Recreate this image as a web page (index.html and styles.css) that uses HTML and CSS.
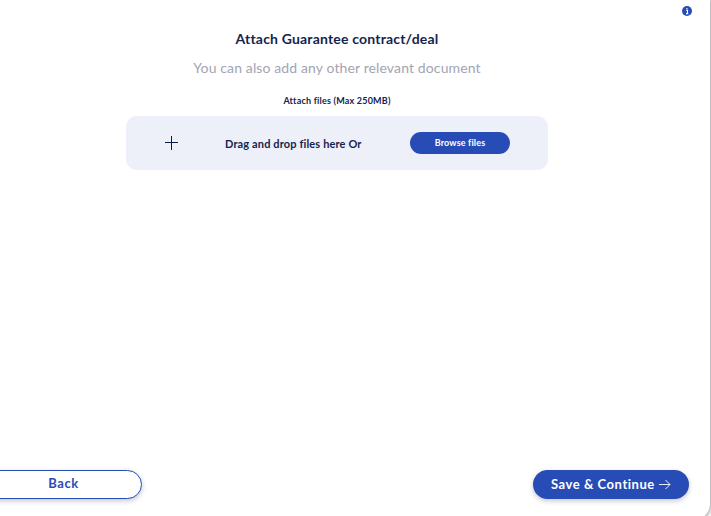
FILE: index.html
```html
<!DOCTYPE html>
<html lang="en">
<head>
<meta charset="utf-8">
<title>Attach documents</title>
<link rel="stylesheet" href="styles.css">
</head>
<body>
<main class="modal">
  <svg class="info" viewBox="0 0 10 10" aria-label="Information"><circle cx="5" cy="5" r="5" fill="#284cb5"/><path d="M4.1 4.2h1.4v3.3M4 7.6h2.3M4.9 2v1.2" fill="none" stroke="#fff" stroke-width="1.1"/></svg>
  <section class="content">
    <h1><span>Attach Guarantee contract/deal</span></h1>
    <p class="subtitle"><span>You can also add any other relevant document</span></p>
    <p class="label"><span>Attach files (Max 250MB)</span></p>
    <div class="dropzone">
      <svg class="plus" viewBox="0 0 14 14"><path d="M0 6.5h13M6.5 0v14" fill="none" stroke="#0c1b45"/></svg>
      <span class="hint">Drag and drop files here Or</span>
      <button class="browse"><span>Browse files</span></button>
    </div>
  </section>
  <footer>
    <button class="back"><span>Back</span></button>
    <button class="save"><span>Save &amp; Continue</span><svg class="arrow" viewBox="0 0 12 11"><path d="M0 5.5h11M6.5 1l4.5 4.5L6.5 10" fill="none" stroke="#fff" stroke-width=".9"/></svg></button>
  </footer>
</main>
</body>
</html>
```
FILE: styles.css
```css
* { box-sizing: border-box; }
body {
  margin: 0;
  height: 516px;
  overflow: hidden;
  background: #fff;
  color: #14244f;
  font-family: Lato, "Liberation Sans", sans-serif;
}
h1, p { margin: 0; }
button { border: 0; padding: 0; font-family: inherit; }
.modal {
  position: relative;
  display: flex;
  flex-direction: column;
  justify-content: space-between;
  width: 730px;
  height: 520px;
  margin-left: -20px;
  padding: 30px 21px 21px 0;
  background: #fff;
  border-radius: 0 0 16px 0;
  box-shadow: 0 0 4px 1px rgba(35, 31, 45, .5);
}
.info { position: absolute; top: 6px; right: 18px; width: 10px; height: 10px; }
.content {
  display: flex;
  flex-direction: column;
  align-items: center;
  width: 422px;
  margin-left: 146px;
  white-space: nowrap;
}
h1 { font-size: 14px; line-height: 18px; letter-spacing: .19px; }
.subtitle { margin-top: 11px; font-size: 14px; line-height: 18px; color: #a3a4b3; letter-spacing: .12px; }
.label { margin-top: 18px; font-size: 9px; line-height: 12px; font-weight: 700; letter-spacing: .2px; }
.dropzone {
  display: flex;
  align-items: center;
  width: 422px;
  height: 54px;
  margin-top: 9px;
  padding: 0 38px;
  border-radius: 11px;
  background: #edf0f9;
}
.plus { width: 14px; height: 14px; margin-left: 1px; }
.hint { width: 137px; margin-left: 46px; font-size: 11px; font-weight: 700; letter-spacing: .14px; }
.browse {
  width: 100px;
  height: 22px;
  margin-left: auto;
  border-radius: 11px;
  background: #284cb5;
  color: #fff;
  font-size: 9px;
  line-height: 22px;
  font-weight: 700;
  letter-spacing: .15px;
}
footer { display: flex; justify-content: space-between; }
.back, .save { height: 29px; border-radius: 15px; font-size: 13px; font-weight: 700; box-shadow: 0 2px 5px rgba(30, 40, 80, .25); }
.back { width: 162px; padding: 0 0 3px 5px; border: 1px solid #284cb5; background: #fff; color: #284cb5; letter-spacing: .6px; }
.save { display: flex; align-items: center; width: 156px; padding: 0 0 2px 18px; background: #284cb5; color: #fff; letter-spacing: .54px; }
.arrow { width: 12px; height: 11px; margin: 2px 0 0 4px; }
```
